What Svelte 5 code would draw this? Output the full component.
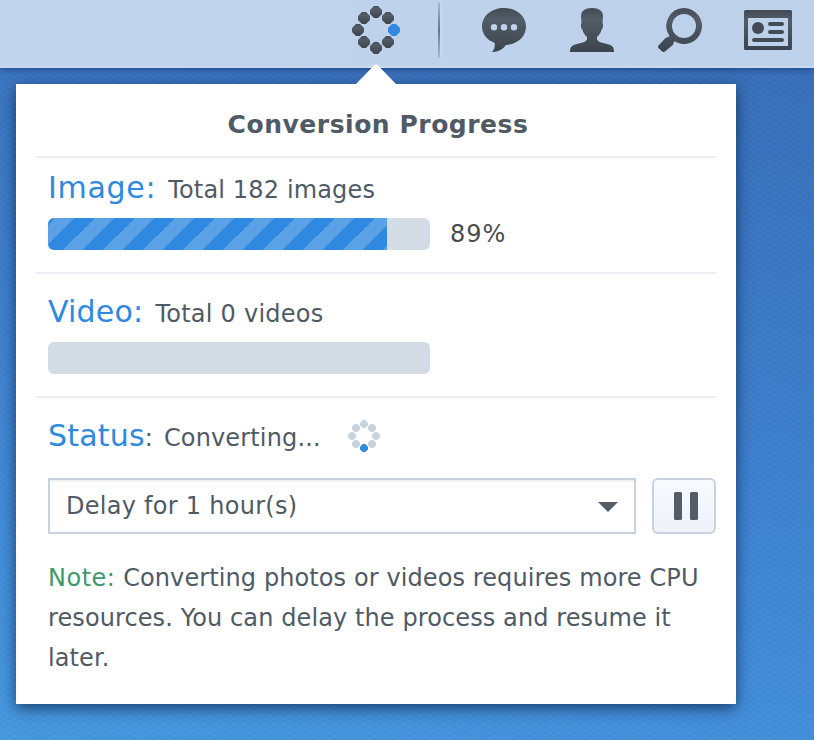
<script lang="ts">
  interface Dot {
    x: number;
    y: number;
  }

  const dots: Dot[] = [
    { x: 24, y: 6 },
    { x: 36, y: 12 },
    { x: 42, y: 24 },
    { x: 36, y: 36 },
    { x: 24, y: 42 },
    { x: 12, y: 36 },
    { x: 6, y: 24 },
    { x: 12, y: 12 },
  ];

  let images = $state({ total: 182, percent: 89 });
  let videos = $state({ total: 0 });
  let paused = $state(false);
</script>

{#snippet spinner(active: number, cls: string)}
  <svg class={cls} viewBox="0 0 48 48" aria-hidden="true">
    {#each dots as dot, i}
      <path
        class:active={i === active}
        transform="translate({dot.x} {dot.y})"
        d="M-2-6H2L6-2V2L2 6H-2L-6 2V-2Z"
      />
    {/each}
  </svg>
{/snippet}

<div class="desktop">
  <svg class="defs" width="0" height="0" aria-hidden="true">
    <defs>
      <linearGradient id="ink" x1="0" y1="0" x2="0" y2="1">
        <stop offset="0" stop-color="#434a53" />
        <stop offset="0.25" stop-color="#535d67" />
        <stop offset="1" stop-color="#3c444d" />
      </linearGradient>
    </defs>
  </svg>

  <header class="taskbar">
    <button class="tray" aria-label="Conversion">
      {@render spinner(2, "busy")}
    </button>
    <span class="separator"></span>
    <button class="tray" aria-label="Messages">
      <svg viewBox="0 0 48 48">
        <path
          fill="url(#ink)"
          fill-rule="evenodd"
          d="M24 4C11.500 4 2 12 2 22.500c0 7.500 5 13.500 12.500 16.300.8 3.500-.2 6.700-2.500 9.200 6.500.2 11-3 14-7C38 40 46 32.500 46 22.500 46 12 36.500 4 24 4ZM14 20a3.200 3.200 0 1 1 0 6.400 3.200 3.200 0 0 1 0-6.400Zm10 0a3.200 3.200 0 1 1 0 6.400 3.200 3.200 0 0 1 0-6.400Zm10 0a3.200 3.200 0 1 1 0 6.400 3.200 3.200 0 0 1 0-6.400Z"
        />
      </svg>
    </button>
    <button class="tray" aria-label="Account">
      <svg viewBox="0 0 48 48">
        <path
          fill="url(#ink)"
          d="M24 4c-7 0-11 3-11 8l.5 7c-1 1-.7 5 .8 6.500C15 29 17 31 19 33v2.500c-1 2.500-5 3.200-10 4.500-5 1.200-7 3-7 8h44c0-5-2-6.800-7-8-5-1.300-9-2-10-4.500V33c2-2 4-4 4.700-7.500 1.500-1.500 1.800-5.500.8-6.500l.5-7c0-5-4-8-11-8Z"
        />
      </svg>
    </button>
    <button class="tray" aria-label="Search">
      <svg viewBox="0 0 48 48">
        <path
          fill="url(#ink)"
          fill-rule="evenodd"
          d="M28 4a18 18 0 1 1-9.500 33.300c-.8 1.200-1.200 2.500-1.700 3.700L9 47.500c-1 .7-2 .7-2.800 0l-3.500-3.200c-1-.9-1-1.800-.2-2.800L9 34.500c1.200-1.300 3-1.500 4.700-2A18 18 0 0 1 28 4Zm0 6a12 12 0 1 0 0 24 12 12 0 0 0 0-24Z"
        />
      </svg>
    </button>
    <button class="tray" aria-label="Widgets">
      <svg viewBox="0 0 48 48">
        <path
          fill="url(#ink)"
          fill-rule="evenodd"
          d="M1.500 6h45Q48 6 48 7.500v37q0 1.500-1.500 1.500h-45Q0 46 0 44.500v-37Q0 6 1.500 6ZM4 14v28h40V14Z"
        />
        <circle cx="14" cy="24" r="6" fill="#434b54" />
        <path stroke="#434b54" stroke-width="4" stroke-linecap="round" d="M26 20h12M26 28h12M10 36h28" />
      </svg>
    </button>
  </header>

  <section class="panel">
    <svg class="pointer" viewBox="0 0 40 20" aria-hidden="true">
      <path d="M0 20 18.500 1Q20-.5 21.500 1L40 20Z" />
    </svg>

    <h1>Conversion Progress</h1>

    <div class="task image">
      <div class="heading">
        <span class="label">Image:</span>
        <span class="total">Total {images.total} images</span>
      </div>
      <div class="progress">
        <div class="track">
          <div class="fill" style="width: {images.percent}%"></div>
        </div>
        <span class="percent">{images.percent}%</span>
      </div>
    </div>

    <div class="task video">
      <div class="heading">
        <span class="label">Video:</span>
        <span class="total">Total {videos.total} videos</span>
      </div>
      <div class="progress">
        <div class="track"></div>
      </div>
    </div>

    <div class="status">
      <div class="heading">
        <span class="label">Status</span><span class="colon">:</span>
        <span class="total">{paused ? "Paused" : "Converting..."}</span>
        {@render spinner(4, "loading")}
      </div>
      <div class="controls">
        <button class="select">
          <span>Delay for 1 hour(s)</span>
          <svg width="20" height="10" viewBox="0 0 20 10"><path d="M0 0H20L10 10Z" /></svg>
        </button>
        <button class="pause" aria-label="Pause" onclick={() => (paused = !paused)}>
          <svg width="24" height="28" viewBox="0 0 24 28">
            <rect width="8" height="28" rx="1.500" />
            <rect x="16" width="8" height="28" rx="1.500" />
          </svg>
        </button>
      </div>
      <p class="note">
        <em>Note:</em> Converting photos or videos requires more CPU<br />
        resources. You can delay the process and resume it<br />
        later.
      </p>
    </div>
  </section>
</div>

<style>
  :global(body) {
    margin: 0;
  }

  .desktop {
    box-sizing: border-box;
    width: 814px;
    height: 740px;
    overflow: hidden;
    font-family: "DejaVu Sans", Verdana, sans-serif;
    font-size: 24px;
    color: #505a64;
    background:
      repeating-linear-gradient(30deg, rgba(255, 255, 255, 0.02) 0 2px, transparent 2px 5px),
      repeating-linear-gradient(-30deg, rgba(0, 20, 60, 0.025) 0 2px, transparent 2px 5px),
      linear-gradient(192deg, #376cb5 0%, #3c7dca 45%, #428dd9 78%, #4598de 100%);
  }

  .defs {
    display: block;
  }

  button {
    margin: 0;
    font: inherit;
    color: inherit;
    cursor: pointer;
  }

  .taskbar {
    box-sizing: border-box;
    height: 68px;
    display: flex;
    justify-content: flex-end;
    padding: 6px 22px 0 0;
    border-bottom: 2px solid #c8d8ef;
    background: linear-gradient(90deg, #c1d4ed, #bdd1eb);
    box-shadow: 0 1px 7px rgba(0, 20, 60, 0.5);
  }

  .tray {
    width: 48px;
    height: 48px;
    margin-left: 40px;
    padding: 0;
    border: 0;
    background: none;
  }

  .tray svg {
    display: block;
    width: 48px;
    height: 48px;
    fill: url(#ink);
    margin-top: -4px;
  }

  .tray .busy {
    margin-top: 0;
  }

  svg path.active {
    fill: #2f89e0;
  }

  .separator {
    width: 2px;
    height: 56px;
    margin: -4px 0 0 38px;
    border-right: 2px solid #c8d8ee;
    background: linear-gradient(#a9bbd4, #65748a 50%, #a9bbd4);
    background-clip: padding-box;
  }

  .separator + .tray {
    margin-left: 38px;
  }

  .panel {
    position: relative;
    box-sizing: border-box;
    width: 720px;
    height: 620px;
    margin: 16px 0 0 16px;
    padding: 0 20px;
    background: #fff;
    box-shadow: 0 4px 14px rgba(0, 20, 50, 0.65);
  }

  /* Arrow that ties the panel to its tray icon. */
  .pointer {
    position: absolute;
    left: 340px;
    top: -20px;
    width: 40px;
    height: 20px;
    fill: #fff;
  }

  h1 {
    height: 72px;
    margin: 0;
    border-bottom: 2px solid #ebeff3;
    font-size: 25px;
    line-height: 82px;
    letter-spacing: 0.53px;
    text-indent: 4px;
    text-align: center;
  }

  .task {
    box-sizing: border-box;
    height: 124px;
    padding: 18px 12px 0;
    border-bottom: 2px solid #ebeff3;
  }

  .task.image {
    height: 116px;
    padding-top: 10px;
  }

  .heading {
    display: flex;
    align-items: baseline;
    height: 40px;
    line-height: 40px;
    white-space: nowrap;
  }

  .label {
    font-size: 30px;
    letter-spacing: 0.2px;
    color: #2f89e0;
  }

  .image .label {
    letter-spacing: 0.7px;
  }

  .total {
    margin-left: 12px;
    letter-spacing: 0.15px;
  }

  .video .total {
    letter-spacing: 0.25px;
  }

  .status .total {
    margin-left: 11px;
  }

  .progress {
    display: flex;
    align-items: center;
    height: 32px;
    margin-top: 10px;
  }

  .track {
    width: 382px;
    height: 32px;
    overflow: hidden;
    border-radius: 6px;
    background: #d3dbe5;
  }

  .fill {
    height: 100%;
    max-width: 339px;
    background: linear-gradient(
        -45deg,
        #5aa1e6 25%,
        #2f89e0 25% 50%,
        #5aa1e6 50% 75%,
        #2f89e0 75%
      )
      27px 0 / 40px 40px;
  }

  .percent {
    margin-left: 20px;
    letter-spacing: 1px;
    color: #4b4b4f;
  }

  .status {
    padding: 18px 0 0 12px;
  }

  .loading {
    align-self: center;
    width: 32px;
    height: 32px;
    margin-left: 27px;
    fill: #c9d3de;
  }

  .controls {
    display: flex;
    gap: 16px;
    margin-top: 22px;
  }

  .select {
    box-sizing: border-box;
    width: 588px;
    height: 56px;
    display: flex;
    align-items: center;
    justify-content: space-between;
    padding: 0 16px;
    border: 2px solid #c8d2dc;
    background: #fff;
    box-shadow: inset 0 2px 0 #f1f2f3;
    letter-spacing: 0.27px;
    fill: #535d67;
  }

  .select svg {
    margin-top: 2px;
  }

  .pause {
    box-sizing: border-box;
    width: 64px;
    height: 56px;
    display: grid;
    place-items: center;
    padding: 0 0 0 4px;
    border: 2px solid #c8d2dc;
    border-radius: 6px;
    background: linear-gradient(#f7faff, #eff3f9);
    fill: #535d67;
  }

  .note {
    margin: 24px 0 0;
    line-height: 40px;
    letter-spacing: 0.1px;
    white-space: nowrap;
  }

  .note em {
    font-style: normal;
    letter-spacing: 0.5px;
    color: #40996b;
  }
</style>
